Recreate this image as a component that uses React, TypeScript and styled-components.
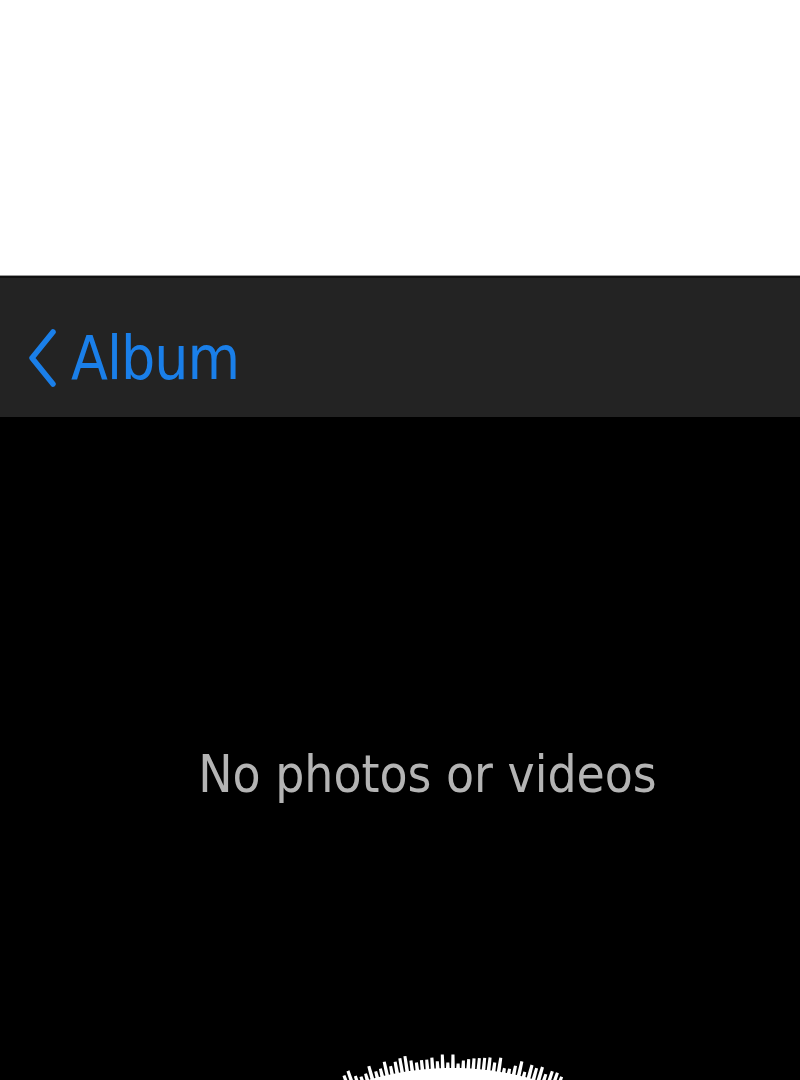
import React from "react";
import styled, { createGlobalStyle } from "styled-components";

const GlobalStyle = createGlobalStyle`
  html, body {
    margin: 0;
    padding: 0;
    background: #ffffff;
  }
  body {
    font-family: "DejaVu Sans Condensed", "DejaVu Sans", sans-serif;
  }
`;

// waveform ring drawn around a big circle, only its top shows
const burstPoints = () => {
  const cx = 452;
  const cy = 318;
  const base = 300;
  let seed = 11;
  const rand = () => {
    seed = (seed * 9301 + 49297) % 233280;
    return seed / 233280;
  };
  const pts: string[] = [];
  const start = -Math.PI / 2 - 0.36;
  const end = -Math.PI / 2 + 0.36;
  const step = 0.017;
  const p = (ang: number, r: number) =>
    `${(cx + Math.cos(ang) * r).toFixed(1)},${(cy + Math.sin(ang) * r).toFixed(1)}`;
  for (let a = start; a <= end; a += step) {
    const len = 4 + rand() * 12;
    const w = step * 0.72;
    pts.push(p(a, base));
    pts.push(p(a + w * 0.1, base + len));
    pts.push(p(a + w * 0.9, base + len));
    pts.push(p(a + w, base));
  }
  pts.push(`${cx + 400},${cy + 400}`);
  pts.push(`${cx - 400},${cy + 400}`);
  return pts.join(" ");
};

const App = () => {
  return (
    <>
      <GlobalStyle />
      <Page>
        <TopBlank />
        <NavBar>
          <BackButton>
            <svg width="30" height="58" viewBox="0 0 30 58">
              <polyline
                points="26,3 5,29 26,55"
                fill="none"
                stroke="#1a7fe9"
                strokeWidth="5.5"
                strokeLinecap="round"
                strokeLinejoin="round"
              />
            </svg>
            <BackLabel>Album</BackLabel>
          </BackButton>
        </NavBar>
        <Content>
          <EmptyText>No photos or videos</EmptyText>
          <Burst viewBox="0 0 800 30" preserveAspectRatio="none">
            <polygon points={burstPoints()} fill="#ffffff" />
          </Burst>
        </Content>
      </Page>
    </>
  );
};

const Page = styled.div`
  width: 800px;
  height: 1080px;
  display: flex;
  flex-direction: column;
  overflow: hidden;
`;

const TopBlank = styled.div`
  height: 275px;
  background: #ffffff;
  border-bottom: 1px solid #9a9a9a;
`;

const NavBar = styled.div`
  height: 139px;
  background: #232323;
  border-top: 2px solid #111111;
  display: flex;
  align-items: center;
  padding-left: 27px;
`;

const BackButton = styled.div`
  display: flex;
  align-items: center;
  gap: 14px;
  margin-top: 20px;
`;

const BackLabel = styled.span`
  color: #1a7fe9;
  font-size: 60px;
  line-height: 1;
  letter-spacing: -1px;
`;

const Content = styled.div`
  flex: 1;
  background: #000000;
  display: flex;
  flex-direction: column;
  align-items: center;
`;

const EmptyText = styled.div`
  margin-top: 332px;
  margin-left: 55px;
  color: #b4b4b4;
  font-size: 51px;
  line-height: 1;
`;

const Burst = styled.svg`
  margin-top: auto;
  width: 800px;
  height: 30px;
  display: block;
`;

export default App;
